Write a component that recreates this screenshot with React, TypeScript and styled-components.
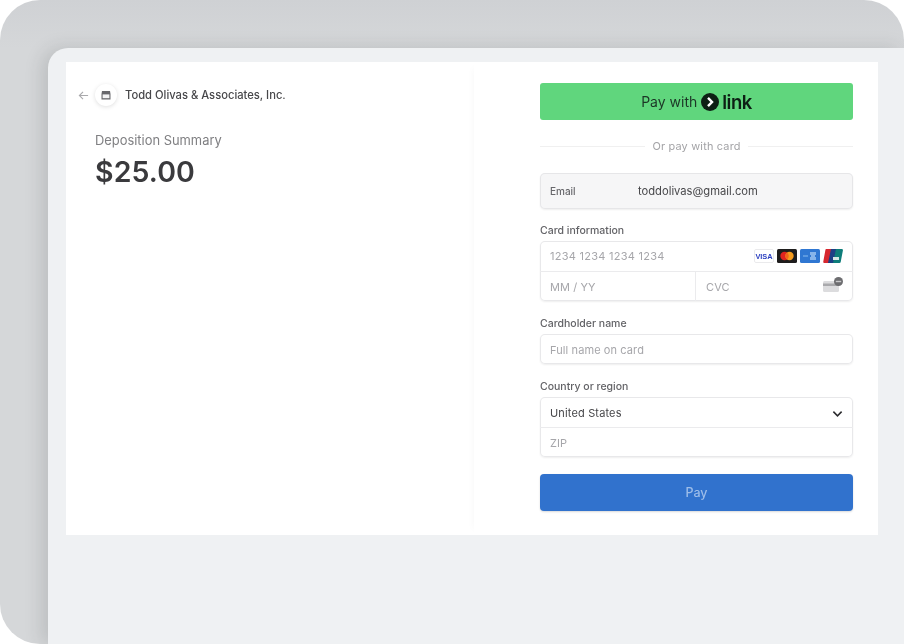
import React from "react";
import styled, { createGlobalStyle } from "styled-components";

const Global = createGlobalStyle`
  html, body { margin: 0; padding: 0; background: #fff; }
  body { font-family: Inter, "Liberation Sans", sans-serif; -webkit-font-smoothing: antialiased; }
  * { box-sizing: border-box; }
`;

const Frame = styled.div`
  width: 904px; height: 644px; overflow: hidden;
  background: linear-gradient(180deg, #cfd1d4 0, #d5d7d9 48px);
  border-radius: 40px 40px 0 40px;
  padding: 48px 0 0 48px;
`;
const Bezel = styled.div`
  width: 856px; height: 596px; background: #eff1f3;
  border-radius: 20px 0 0 0;
  padding: 14px 26px 0 18px;
  box-shadow: -6px 0 18px rgba(40, 44, 50, .15);
`;
const Sheet = styled.main`
  height: 473px; background: #fff;
  display: grid; grid-template-columns: 408px 404px;
  filter: blur(.3px);
`;
const Summary = styled.section`
  padding: 23px 0 0 12px;
`;
const Header = styled.div`
  display: flex; align-items: center; height: 20px;
`;
const Back = styled.svg`
  width: 11px; height: 11px; margin-right: 6px; flex: none;
`;
const LogoDisc = styled.span`
  width: 22px; height: 22px; border-radius: 50%; background: #fff; flex: none;
  display: flex; align-items: center; justify-content: center;
  box-shadow: 0 1px 4px rgba(0, 0, 0, .13);
  margin-right: 8px;
`;
const Merchant = styled.span`
  font-size: 11.2px; font-weight: 550; color: #47474a; white-space: nowrap;
`;
const ProductName = styled.div`
  margin: 26px 0 0 17px; font-size: 12.9px; line-height: 20px; color: #808083; font-weight: 400;
`;
const Amount = styled.div`
  margin: 3px 0 0 17px; font-size: 28.5px; line-height: 36px; color: #3a3a3d; font-weight: 600; letter-spacing: .1px;
`;
const FormPanel = styled.section`
  padding: 21px 25px 0 66px;
  box-shadow: -6px 0 8px -6px rgba(0, 0, 0, .035);
`;
const LinkButton = styled.div`
  height: 37px; border-radius: 3px; background: #60d67d; color: #1c3626;
  display: flex; align-items: center; justify-content: center;
  font-size: 14px; font-weight: 400; gap: 4px;
`;
const LinkMark = styled.svg`
  width: 18px; height: 18px; flex: none;
`;
const LinkWord = styled.span`
  font-size: 18.5px; font-weight: 600; color: #0d1f14; letter-spacing: -.5px; margin-left: -1px; line-height: 20px;
`;
const Divider = styled.div`
  margin-top: 17px; height: 18px; display: flex; align-items: center; gap: 7px;
  font-size: 10.9px; color: #a3a3a6; letter-spacing: .2px; white-space: nowrap;
  &::before, &::after { content: ""; flex: 1; height: 1px; background: #f0f0f0; }
`;
const EmailBox = styled.div`
  margin-top: 18px; height: 36px; border-radius: 5px; background: #f6f6f7;
  box-shadow: inset 0 0 0 1px #e6e6e8, 0 1px 2px rgba(0, 0, 0, .07);
  display: flex; align-items: center; padding-left: 10px;
`;
const EmailLabel = styled.span`
  width: 88px; font-size: 10px; font-weight: 500; color: #68686c;
`;
const EmailValue = styled.span`
  font-size: 11.2px; color: #47474a;
`;
const Field = styled.div<{ $top: number }>`
  margin-top: ${(p) => p.$top}px;
`;
const Label = styled.div`
  font-size: 10.5px; font-weight: 500; line-height: 14px; color: #626266; margin-bottom: 3px;
`;
const Group = styled.div`
  border-radius: 5px; background: #fff;
  box-shadow: inset 0 0 0 1px #e8e8ea, 0 1px 2px rgba(0, 0, 0, .07);
`;
const Row = styled.div<{ $line?: boolean }>`
  height: 30px; display: flex; align-items: center;
  border-top: ${(p) => (p.$line ? "1px solid #ebebed" : "0")};
`;
const Cell = styled.div<{ $divided?: boolean; $basis?: string; $low?: boolean }>`
  flex: ${(p) => p.$basis || "1"}; height: 100%; display: flex; align-items: center;
  padding: ${(p) => (p.$low ? "2px 10px 0" : "0 10px")};
  justify-content: space-between;
  border-left: ${(p) => (p.$divided ? "1px solid #ebebed" : "0")};
`;
const Placeholder = styled.span<{ $spread?: number }>`
  font-size: 11px; color: #a6a6aa; letter-spacing: ${(p) => p.$spread ?? 0.1}px;
`;
const Value = styled.span`
  font-size: 11px; color: #47474a; letter-spacing: .15px;
`;
const Brands = styled.div`
  display: flex; gap: 3px;
`;
const Badge = styled.svg`
  width: 20px; height: 14px; display: block;
`;
const CvcIcon = styled.svg`
  width: 22px; height: 15px; display: block; margin-right: -1px; margin-top: -5px;
`;
const Chevron = styled.svg`
  width: 11px; height: 11px; display: block;
`;
const PayButton = styled.div`
  margin-top: 17px; height: 37px; border-radius: 4px; background: #3172cd;
  display: flex; align-items: center; justify-content: center;
  font-size: 12.5px; font-weight: 500; color: #9dbde9;
  box-shadow: 0 1px 2px rgba(0, 0, 0, .15);
`;
const BadgeText = styled.text`
  font-family: "Liberation Sans", sans-serif; font-weight: 700;
`;

export default function App() {
  return (
    <>
      <Global />
      <Frame>
        <Bezel>
          <Sheet>
            <Summary>
              <Header>
                <Back viewBox="0 0 12 12" fill="none" stroke="#a9a9ac" strokeWidth="1.2">
                  <path d="M11 6H1.5M5.5 2 1.5 6l4 4" />
                </Back>
                <LogoDisc>
                  <svg width="10" height="10" viewBox="0 0 10 10">
                    <path d="M1 1h8l.5 3v5.5h-9V4z" fill="#68686c" />
                    <rect x="1.6" y="4.4" width="6.8" height="3.8" fill="#f4f4f5" />
                  </svg>
                </LogoDisc>
                <Merchant>Todd Olivas &amp; Associates, Inc.</Merchant>
              </Header>
              <ProductName>Deposition Summary</ProductName>
              <Amount>$25.00</Amount>
            </Summary>
            <FormPanel>
              <LinkButton>
                Pay with
                <LinkMark viewBox="0 0 17 17">
                  <circle cx="8.5" cy="8.5" r="8.5" fill="#0d1f14" />
                  <path d="M6.6 4.7 10.4 8.5 6.6 12.3" fill="none" stroke="#fff" strokeWidth="2.3" />
                </LinkMark>
                <LinkWord>link</LinkWord>
              </LinkButton>
              <Divider>Or pay with card</Divider>
              <EmailBox>
                <EmailLabel>Email</EmailLabel>
                <EmailValue>toddolivas@gmail.com</EmailValue>
              </EmailBox>
              <Field $top={15}>
                <Label>Card information</Label>
                <Group>
                  <Row>
                    <Cell>
                      <Placeholder $spread={0.27}>1234 1234 1234 1234</Placeholder>
                      <Brands>
                        <Badge viewBox="0 0 20 14">
                          <rect x=".5" y=".5" width="19" height="13" rx="1.5" fill="#fff" stroke="#eaeaec" />
                          <BadgeText x="10" y="9.6" fontSize="7.4" fill="#2a3fc0" textAnchor="middle">VISA</BadgeText>
                        </Badge>
                        <Badge viewBox="0 0 20 14">
                          <rect width="20" height="14" rx="1.5" fill="#1e1d1d" />
                          <circle cx="7.5" cy="7" r="4.2" fill="#e0231f" />
                          <circle cx="12.5" cy="7" r="4.2" fill="#f59b1c" />
                          <path d="M10 3.6a4.2 4.2 0 0 1 0 6.8 4.2 4.2 0 0 1 0-6.8z" fill="#f2631c" />
                        </Badge>
                        <Badge viewBox="0 0 20 14">
                          <rect width="20" height="14" rx="1.5" fill="#2f77d2" />
                          <path d="M10 3h6v3h-1v2h1v3h-6V8h1V6h-1z" fill="#87b5ea" />
                          <rect x="3" y="6" width="5" height="2" fill="#5b99e0" />
                        </Badge>
                        <Badge viewBox="0 0 20 14">
                          <path d="M3 0h7L7 14H1.2Q0 14 .3 12.6L2.4 1Q2.6 0 3 0z" fill="#d6272f" />
                          <path d="M8 0h6l-3 14H5z" fill="#1d3f85" />
                          <path d="M13 0h5.8q1.4 0 1.1 1.4L17.7 13q-.2 1-1.2 1H10z" fill="#0e7d7a" />
                          <rect x="10" y="8" width="6" height="3" fill="#d5e7e5" />
                        </Badge>
                      </Brands>
                    </Cell>
                  </Row>
                  <Row $line>
                    <Cell $basis="0 0 155px"><Placeholder>MM / YY</Placeholder></Cell>
                    <Cell $divided>
                      <Placeholder>CVC</Placeholder>
                      <CvcIcon viewBox="0 0 22 15">
                        <rect x="1" y="4" width="16" height="11" rx="1.5" fill="#dcdcde" />
                        <rect x="1" y="6.5" width="16" height="2.5" fill="#a9a9ac" />
                        <circle cx="16.5" cy="4.5" r="4.5" fill="#6d6d70" />
                        <rect x="13.8" y="3.8" width="5.4" height="1.4" fill="#c8c8ca" />
                      </CvcIcon>
                    </Cell>
                  </Row>
                </Group>
              </Field>
              <Field $top={16}>
                <Label>Cardholder name</Label>
                <Group>
                  <Row><Cell $low><Placeholder>Full name on card</Placeholder></Cell></Row>
                </Group>
              </Field>
              <Field $top={16}>
                <Label>Country or region</Label>
                <Group>
                  <Row>
                    <Cell $low>
                      <Value>United States</Value>
                      <Chevron viewBox="0 0 12 12" fill="none" stroke="#2b2b2e" strokeWidth="1.7">
                        <path d="M1.5 4 6 8.5 10.5 4" />
                      </Chevron>
                    </Cell>
                  </Row>
                  <Row $line><Cell><Placeholder>ZIP</Placeholder></Cell></Row>
                </Group>
              </Field>
              <PayButton>Pay</PayButton>
            </FormPanel>
          </Sheet>
        </Bezel>
      </Frame>
    </>
  );
}
